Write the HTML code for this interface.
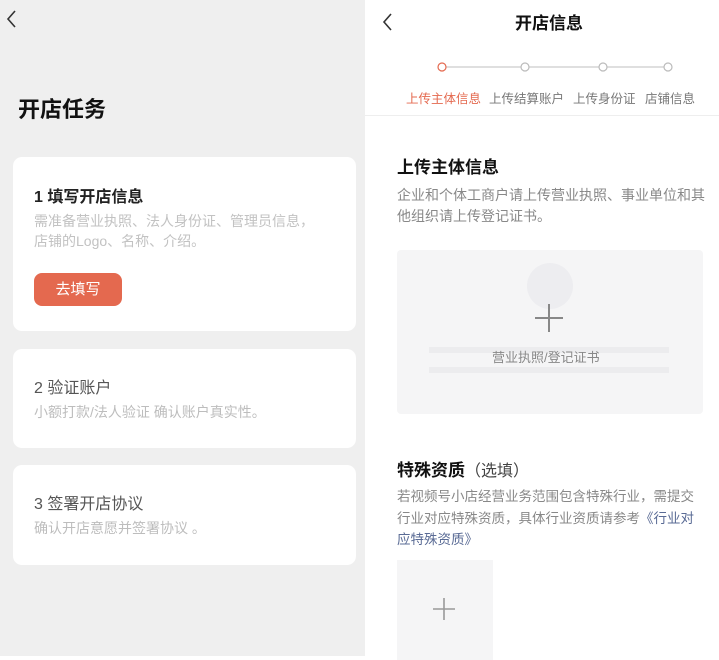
<!DOCTYPE html>
<html><head><meta charset="utf-8"><style>
*{margin:0;padding:0;box-sizing:border-box}
body{width:719px;height:656px;overflow:hidden;position:relative;font-family:"Liberation Sans","Noto Sans CJK SC",sans-serif;background:#fff}
.abs{position:absolute;white-space:nowrap}
#left{position:absolute;left:0;top:0;width:365px;height:656px;background:#efefef}
.card{position:absolute;left:13px;width:343px;background:#fff;border-radius:9px}
</style></head><body>
<div id="left">
<svg class="abs" style="left:4px;top:9px" width="14" height="20"><path d="M11 2 L4 10 L11 18" stroke="#333" stroke-width="1.6" fill="none"/></svg>
<div class="abs" style="left:18px;top:92px;font-size:22px;font-weight:bold;color:#111">开店任务</div>
<div class="card" style="top:157px;height:174px">
<div class="abs" style="left:21px;top:26px;font-size:16px;font-weight:bold;color:#222">1 填写开店信息</div>
<div class="abs" style="left:21px;top:54px;font-size:14px;line-height:20px;color:#c2c2c2">需准备营业执照、法人身份证、管理员信息，<br>店铺的Logo、名称、介绍。</div>
<div class="abs" style="left:21px;top:116px;width:88px;height:33px;background:#e4694f;border-radius:8px;color:#fff;font-size:15px;line-height:33px;text-align:center">去填写</div>
</div>
<div class="card" style="top:349px;height:99px">
<div class="abs" style="left:21px;top:25px;font-size:16px;color:#555">2 验证账户</div>
<div class="abs" style="left:21px;top:53px;font-size:14px;color:#bdbdbd">小额打款/法人验证 确认账户真实性。</div>
</div>
<div class="card" style="top:465px;height:100px">
<div class="abs" style="left:21px;top:25px;font-size:16px;color:#555">3 签署开店协议</div>
<div class="abs" style="left:21px;top:53px;font-size:14px;color:#bdbdbd">确认开店意愿并签署协议 。</div>
</div>
</div>
<svg class="abs" style="left:380px;top:12px" width="14" height="20"><path d="M11 2 L4 10 L11 18" stroke="#333" stroke-width="1.6" fill="none"/></svg>
<div class="abs" style="left:500px;top:9px;width:98px;text-align:center;font-size:17px;font-weight:bold;color:#111">开店信息</div>
<svg class="abs" style="left:430px;top:60px" width="250" height="15">
<line x1="16" y1="7" x2="234" y2="7" stroke="#ccc" stroke-width="1.2"/>
<circle cx="12" cy="7" r="4" fill="#fff" stroke="#e4694f" stroke-width="1.2"/>
<circle cx="95" cy="7" r="4" fill="#fff" stroke="#bbb" stroke-width="1.2"/>
<circle cx="173" cy="7" r="4" fill="#fff" stroke="#bbb" stroke-width="1.2"/>
<circle cx="238" cy="7" r="4" fill="#fff" stroke="#bbb" stroke-width="1.2"/>
</svg>
<div class="abs" style="left:406px;top:88px;font-size:12.5px;color:#e4694f">上传主体信息</div>
<div class="abs" style="left:489px;top:88px;font-size:12.5px;color:#777">上传结算账户</div>
<div class="abs" style="left:573px;top:88px;font-size:12.5px;color:#777">上传身份证</div>
<div class="abs" style="left:645px;top:88px;font-size:12.5px;color:#777">店铺信息</div>
<div class="abs" style="left:365px;top:115px;width:354px;height:1px;background:#eee"></div>
<div class="abs" style="left:397px;top:153px;font-size:17px;font-weight:bold;color:#111">上传主体信息</div>
<div class="abs" style="left:397px;top:185px;font-size:14px;line-height:21px;color:#888">企业和个体工商户请上传营业执照、事业单位和其<br>他组织请上传登记证书。</div>
<div class="abs" style="left:397px;top:250px;width:306px;height:164px;background:#f5f5f6;border-radius:4px"></div>
<div class="abs" style="left:527px;top:263px;width:46px;height:46px;border-radius:50%;background:#ededf0"></div>
<div class="abs" style="left:429px;top:347px;width:240px;height:6px;background:#ececee"></div>
<div class="abs" style="left:429px;top:367px;width:240px;height:6px;background:#ececee"></div>
<svg class="abs" style="left:534px;top:303px" width="30" height="30"><path d="M15 1V29M1 15H29" stroke="#888" stroke-width="2"/></svg>
<div class="abs" style="left:492px;top:347px;font-size:13px;color:#888">营业执照/登记证书</div>
<div class="abs" style="left:397px;top:456px;font-size:17px;color:#111"><b>特殊资质</b><span style="font-size:16px;color:#444">（选填）</span></div>
<div class="abs" style="left:397px;top:486px;font-size:13.5px;line-height:21.5px;color:#888">若视频号小店经营业务范围包含特殊行业，需提交<br>行业对应特殊资质，具体行业资质请参考<span style="color:#5a6b95">《行业对</span><br><span style="color:#5a6b95">应特殊资质》</span></div>
<div class="abs" style="left:397px;top:560px;width:96px;height:100px;background:#f5f5f6"></div>
<svg class="abs" style="left:432px;top:597px" width="24" height="24"><path d="M12 1V23M1 12H23" stroke="#999" stroke-width="1.6"/></svg>
</body></html>
